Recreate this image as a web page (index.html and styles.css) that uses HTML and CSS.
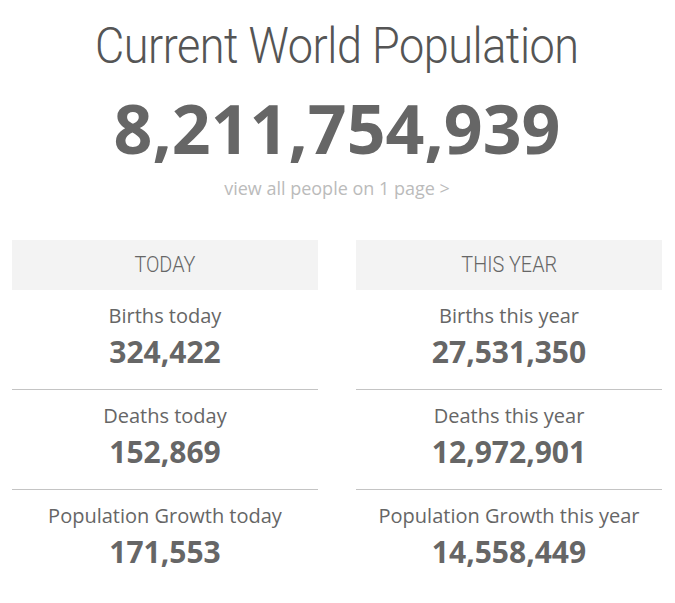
FILE: index.html
```html
<!DOCTYPE html>
<html>
<head>
<meta charset="utf-8">
<link rel="stylesheet" href="styles.css">
</head>
<body>
<div class="page">
  <h1 class="title"><span class="narrow">Current World Population</span></h1>
  <div class="total">8,211,754,939</div>
  <a class="view-all" href="#">view all people on 1 page &gt;</a>
  <div class="columns">
    <section class="col">
      <div class="col-head"><span class="narrow">TODAY</span></div>
      <div class="row"><div class="label">Births today</div><div class="num">324,422</div></div>
      <div class="row"><div class="label">Deaths today</div><div class="num">152,869</div></div>
      <div class="row"><div class="label">Population Growth today</div><div class="num">171,553</div></div>
    </section>
    <section class="col">
      <div class="col-head"><span class="narrow">THIS YEAR</span></div>
      <div class="row"><div class="label">Births this year</div><div class="num">27,531,350</div></div>
      <div class="row"><div class="label">Deaths this year</div><div class="num">12,972,901</div></div>
      <div class="row"><div class="label">Population Growth this year</div><div class="num">14,558,449</div></div>
    </section>
  </div>
</div>
</body>
</html>
```
FILE: styles.css
```css
html, body {
  margin: 0;
  padding: 0;
  background: #fff;
}
.page {
  padding: 0 13px 0 12px;
  text-align: center;
  color: #666;
  font-family: "Open Sans", sans-serif;
}
.narrow {
  display: inline-block;
  transform: scaleX(0.9);
}
.title {
  margin: 0;
  padding-top: 18px;
  font-family: Roboto, sans-serif;
  font-weight: 300;
  font-size: 50px;
  line-height: 56px;
  color: #555;
  letter-spacing: -0.5px;
}
.total {
  margin-top: 19px;
  font-weight: 700;
  font-size: 68px;
  line-height: 70px;
  color: #666;
}
.view-all {
  display: block;
  margin-top: 13px;
  font-size: 18px;
  line-height: 24px;
  color: #bbb;
  text-decoration: none;
}
.columns {
  display: grid;
  grid-template-columns: 306px 306px;
  column-gap: 38px;
  margin-top: 40px;
}
.col-head {
  background: #f3f3f3;
  height: 50px;
  line-height: 50px;
  font-family: Roboto, sans-serif;
  font-weight: 300;
  font-size: 22px;
  color: #666;
}
.row {
  height: 99px;
  border-bottom: 1px solid #c4c4c4;
}
.row:last-child {
  border-bottom: none;
}
.label {
  padding-top: 12px;
  font-size: 20px;
  line-height: 27px;
  color: #666;
}
.num {
  margin-top: 3px;
  font-weight: 700;
  font-size: 30px;
  line-height: 40px;
  color: #666;
}
```
